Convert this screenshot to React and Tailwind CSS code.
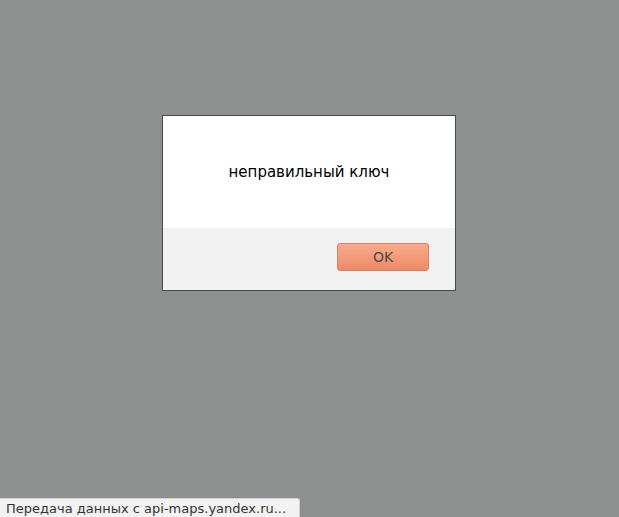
export default function App() {
  return (
    <div className="relative w-[619px] h-[517px] bg-[#8e8f8f] overflow-hidden" style={{ fontFamily: '"DejaVu Sans", sans-serif' }}>
      <div className="flex pt-[115px] pl-[162px]">
        <div className="w-[294px] h-[176px] border border-[#4a4a4a] bg-white flex flex-col">
          <div className="h-[112px] flex items-center justify-center pt-[1px] text-[15px] text-black">
            неправильный ключ
          </div>
          <div className="flex-1 bg-[#f1f1f1] flex justify-end items-start pt-[15px] pr-[26px]">
            <button className="w-[92px] h-[28px] rounded-[3px] border border-[#d8866a] bg-gradient-to-b from-[#f8ab8c] to-[#ee8a66] text-[14px] text-[#4a4a4a] flex items-center justify-center">
              OK
            </button>
          </div>
        </div>
      </div>
      <div className="absolute left-0 bottom-0 w-[300px] h-[19px] bg-[#f2f2f2] border-t border-r border-[#cfcfcf] rounded-tr-[3px] pl-[6px] text-[13px] leading-[19px] text-[#333] whitespace-nowrap">
        Передача данных с api-maps.yandex.ru...
      </div>
    </div>
  );
}
